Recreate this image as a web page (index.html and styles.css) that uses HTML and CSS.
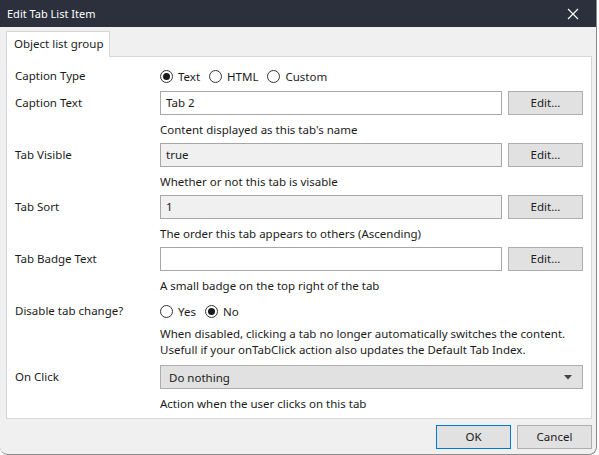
FILE: index.html
```
<!DOCTYPE html>
<html>
<head>
<meta charset="utf-8">
<link rel="stylesheet" href="styles.css">
</head>
<body>
<div class="window">
  <div class="titlebar">
    <span class="title">Edit Tab List Item</span>
    <svg class="close" width="12" height="12" viewBox="0 0 12 12"><path d="M1 1L11 11M11 1L1 11" stroke="#ffffff" stroke-width="1.1" fill="none"/></svg>
  </div>
  <div class="content">
    <div class="tabs"><div class="tab">Object list group</div></div>
    <div class="panel">
      <div class="label">Caption Type</div>
      <div class="field">
        <div class="line radios">
          <span class="radio on"></span><span class="rlabel">Text</span>
          <span class="radio"></span><span class="rlabel">HTML</span>
          <span class="radio"></span><span class="rlabel">Custom</span>
        </div>
      </div>

      <div class="label">Caption Text</div>
      <div class="field">
        <div class="line"><div class="input">Tab 2</div><div class="btn">Edit...</div></div>
        <div class="help">Content displayed as this tab's name</div>
      </div>

      <div class="label">Tab Visible</div>
      <div class="field">
        <div class="line"><div class="input ro">true</div><div class="btn">Edit...</div></div>
        <div class="help">Whether or not this tab is visable</div>
      </div>

      <div class="label">Tab Sort</div>
      <div class="field">
        <div class="line"><div class="input ro">1</div><div class="btn">Edit...</div></div>
        <div class="help">The order this tab appears to others (Ascending)</div>
      </div>

      <div class="label">Tab Badge Text</div>
      <div class="field">
        <div class="line"><div class="input"></div><div class="btn">Edit...</div></div>
        <div class="help">A small badge on the top right of the tab</div>
      </div>

      <div class="label">Disable tab change?</div>
      <div class="field">
        <div class="line radios">
          <span class="radio"></span><span class="rlabel">Yes</span>
          <span class="radio on"></span><span class="rlabel">No</span>
        </div>
        <div class="help multi">When disabled, clicking a tab no longer automatically switches the content.<br>Usefull if your onTabClick action also updates the Default Tab Index.</div>
      </div>

      <div class="label">On Click</div>
      <div class="field">
        <div class="line"><div class="select"><span>Do nothing</span><svg width="8" height="5" viewBox="0 0 8 5"><path d="M0 0H8L4 4.5Z" fill="#444"/></svg></div></div>
        <div class="help">Action when the user clicks on this tab</div>
      </div>
    </div>
    <div class="footer">
      <div class="btn big ok">OK</div>
      <div class="btn big">Cancel</div>
    </div>
  </div>
</div>
</body>
</html>
```
FILE: styles.css
```
* { box-sizing: border-box; }
html, body { margin: 0; padding: 0; background: #ffffff; }
body {
  font-family: "Noto Sans", "Open Sans", sans-serif;
  font-size: 11.5px;
  color: #1b1b1b;
}
.window {
  width: 597px;
  height: 455px;
  background: #f0f0f0;
  border-right: 1px solid #8c8c8c;
  border-bottom: 1px solid #8c8c8c;
  border-radius: 0 0 8px 8px;
  overflow: hidden;
  display: flex;
  flex-direction: column;
}
.titlebar {
  height: 27px;
  background: #2b303c;
  color: #ffffff;
  display: flex;
  align-items: center;
  justify-content: space-between;
  padding: 0 17px 0 7px;
  font-size: 11px;
}
.content {
  padding: 4px 4px 0 6px;
  display: flex;
  flex-direction: column;
}
.tabs { display: flex; }
.tab {
  height: 26px;
  width: 104px;
  padding: 0 0 0 7px;
  white-space: nowrap;
  background: #ffffff;
  border: 1px solid #d6d6d6;
  border-bottom: none;
  line-height: 24px;
  margin-bottom: -1px;
  position: relative;
  z-index: 1;
}
.panel {
  width: 586px;
  background: #ffffff;
  border: 1px solid #d6d6d6;
  padding: 7px 8px 4px 8px;
  display: grid;
  grid-template-columns: 145px 1fr;
  row-gap: 3px;
}
.label { height: 24px; line-height: 24px; }
.field { display: flex; flex-direction: column; }
.line { display: flex; align-items: center; height: 24px; gap: 6px; }
.input {
  flex: 1;
  height: 24px;
  border: 1px solid #a7a7a7;
  background: #ffffff;
  line-height: 22px;
  padding: 0 5px;
}
.input.ro { background: #f0f0f0; }
.btn {
  width: 75px;
  height: 24px;
  border: 1px solid #adadad;
  background: #e1e1e1;
  text-align: center;
  line-height: 22px;
}
.help { line-height: 16px; margin: 7px 0 2px; }
.help.multi { margin: 3px 0 4px; }
.radios { gap: 0; }
.radio {
  width: 13px; height: 13px;
  border: 1px solid #333333;
  border-radius: 50%;
  display: inline-flex;
  align-items: center;
  justify-content: center;
  margin-right: 5px;
}
.radio.on::after {
  content: "";
  width: 7px; height: 7px;
  border-radius: 50%;
  background: #1b1b1b;
}
.rlabel { margin-right: 9px; }
.select {
  flex: 1;
  height: 24px;
  border: 1px solid #adadad;
  background: #e1e1e1;
  display: flex;
  align-items: center;
  justify-content: space-between;
  padding: 0 10px 0 8px;
}
.footer {
  display: flex;
  justify-content: flex-end;
  gap: 6px;
  padding: 6px 0 0 0;
}
.btn.big { height: 24px; line-height: 22px; }
.btn.ok { border-color: #0078d7; }
```
